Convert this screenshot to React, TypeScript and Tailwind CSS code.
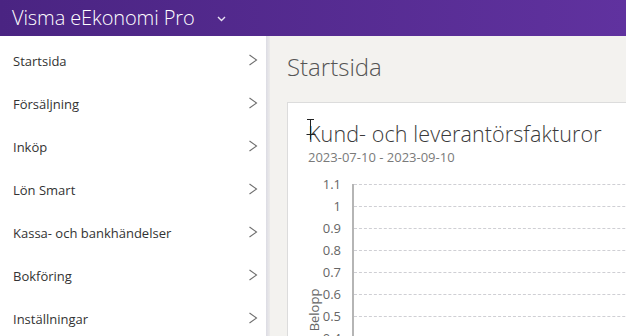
const menu = [
  "Startsida",
  "Försäljning",
  "Inköp",
  "Lön Smart",
  "Kassa- och bankhändelser",
  "Bokföring",
  "Inställningar",
];

const ticks = ["1.1", "1", "0.9", "0.8", "0.7", "0.6", "0.5", "0.4"];

function Chevron() {
  return (
    <svg width="10" height="12" viewBox="0 0 10 12" className="-mt-[4px]">
      <path d="M1.5 1l7 5-7 5" stroke="#6f6f6f" strokeWidth="1.1" fill="none" />
    </svg>
  );
}

export default function App() {
  return (
    <div className="w-[626px] h-[336px] overflow-hidden flex flex-col bg-[#f3f2ef] font-['Open_Sans',sans-serif]">
      {/* top bar */}
      <header className="h-9 shrink-0 flex items-center bg-gradient-to-r from-[#4a2482] to-[#60329f] text-white">
        <h1 className="ml-3 text-[20px] font-light tracking-[-0.1px] leading-none">Visma eEkonomi Pro</h1>
        <svg width="9" height="6" viewBox="0 0 9 6" className="ml-[22px] mt-[1px]">
          <path d="M1 1l3.5 3.5L8 1" stroke="#e8e2f2" strokeWidth="1.4" fill="none" />
        </svg>
      </header>

      <div className="flex flex-1 min-h-0">
        {/* sidebar */}
        <nav className="w-[266px] shrink-0 bg-white pt-[4px]">
          {menu.map((item) => (
            <div key={item} className="h-[43px] flex items-center justify-between pl-[13px] pr-[8px]">
              <span className="text-[13px] text-[#333]">{item}</span>
              <Chevron />
            </div>
          ))}
        </nav>
        <div className="w-[4px] shrink-0 bg-gradient-to-r from-[#dcdce4] to-[#ecebeb]" />

        {/* main */}
        <main className="flex-1 min-w-0 pl-[17px] relative">
          <h2 className="mt-[16px] h-[30px] text-[24px] font-light text-[#555] leading-[30px]">Startsida</h2>
          <section className="mt-[20px] -mr-10 bg-white border border-[#dcdcdc] pl-[20px] pt-[17px]">
            <h3 className="text-[21.5px] font-light text-[#3a3a3a] leading-[28px] tracking-[0.1px]">
              Kund- och leverantörsfakturor
            </h3>
            <p className="mt-[1px] text-[13px] text-[#7a7a7a] leading-4">2023-07-10 - 2023-09-10</p>

            <div className="mt-[11px] flex relative">
              <span className="absolute left-[6px] top-[134px] -translate-x-1/2 -translate-y-1/2 -rotate-90 text-[13px] text-[#666] leading-none whitespace-nowrap">
                Belopp
              </span>
              <div className="w-[33px] shrink-0 flex flex-col items-end">
                {ticks.map((t) => (
                  <div key={t} className="h-[22px] text-[13px] text-[#666] leading-[16px]">
                    {t}
                  </div>
                ))}
              </div>
              <div className="ml-[11px] flex-1 border-l-2 border-[#b5b5b5] mt-[8px] flex flex-col">
                {ticks.map((t) => (
                  <div key={t} className="h-[22px] border-t border-dashed border-[#cfcfd4]" />
                ))}
              </div>
            </div>
          </section>

          {/* mouse cursor */}
          <svg className="absolute left-[35px] top-[82px]" width="12" height="24" viewBox="0 0 12 24">
            <path d="M2 1.5h7M5.5 1.5v20M1.5 16.5h9" stroke="#222" strokeWidth="1" fill="none" />
          </svg>
        </main>
      </div>
    </div>
  );
}
